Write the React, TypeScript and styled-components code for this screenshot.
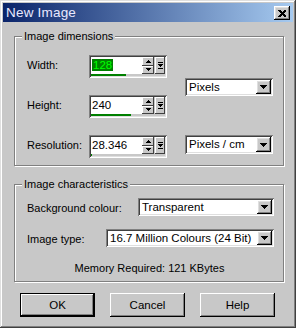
import React from "react";
import styled, { createGlobalStyle } from "styled-components";

const GRAY = "#c8c8c8";

const GlobalStyle = createGlobalStyle`
  html, body { margin: 0; padding: 0; background: ${GRAY}; }
  body { font-family: "Liberation Sans", Arial, sans-serif; font-size: 11px; color: #000; }
  * { box-sizing: border-box; }
`;

const raised = `box-shadow: inset -1px -1px #000, inset 1px 1px #fff, inset -2px -2px #808080, inset 2px 2px #dfdfdf;`;
const sunken = `box-shadow: inset 1px 1px #808080, inset -1px -1px #fff, inset 2px 2px #404040, inset -2px -2px #dfdfdf;`;

const Window = styled.div`
  width: 296px;
  height: 328px;
  padding: 3px;
  overflow: hidden;
  background: ${GRAY};
  box-shadow: inset -1px -1px #404040, inset 1px 1px #dfdfdf, inset -2px -2px #808080, inset 2px 2px #fff;
  display: flex;
  flex-direction: column;
`;

const TitleBar = styled.div`
  height: 19px;
  flex-shrink: 0;
  display: flex;
  align-items: center;
  justify-content: space-between;
  padding: 0 3px 0 3px;
  background: linear-gradient(to right, #0a246a, #a6caf0);
`;

const TitleText = styled.span`
  color: #e8e8ff;
  font-size: 13.5px;
  letter-spacing: 0.2px;
`;

const CloseButton = styled.div`
  width: 16px;
  height: 14px;
  background: ${GRAY};
  ${raised}
  display: flex;
  align-items: center;
  justify-content: center;
  margin-top: 1px;
`;

const Content = styled.div`
  display: flex;
  flex-direction: column;
  padding: 14px 9px 0 11px;
`;

const GroupBox = styled.div<{ $pt: number; $pb: number; $mt: number }>`
  position: relative;
  width: 270px;
  margin-top: ${(p) => p.$mt}px;
  padding: ${(p) => p.$pt}px 9px ${(p) => p.$pb}px 12px;
  border: 1px solid #808080;
  box-shadow: inset 1px 1px #fff, 1px 1px #fff;
`;

const Legend = styled.span`
  position: absolute;
  top: -7px;
  left: 7px;
  padding: 0 2px;
  line-height: 13px;
  background: ${GRAY};
`;

const DimGrid = styled.div`
  display: grid;
  grid-template-columns: 62px 96px 88px;
  grid-template-rows: 23px 23px 23px;
  row-gap: 17px;
`;

const Label = styled.span<{ $row: number }>`
  grid-column: 1;
  grid-row: ${(p) => p.$row};
  align-self: start;
  padding-top: 2px;
  line-height: 17px;
  white-space: nowrap;
`;

const SpinFrame = styled.div<{ $row: number }>`
  grid-column: 2;
  grid-row: ${(p) => p.$row};
  width: 78px;
  height: 23px;
  padding: 2px;
  background: ${GRAY};
  ${sunken}
  display: flex;
  flex-direction: column;
`;

const SpinRow = styled.div`
  height: 17px;
  display: flex;
`;

const FieldText = styled.div`
  width: 52px;
  background: #fff;
  padding-left: 1px;
  line-height: 17px;
  font-size: 11.5px;
`;

const Selected = styled.span`
  background: #008000;
  color: #00ff00;
  padding: 0 1px;
`;

const SpinCol = styled.div`
  width: 12px;
  display: flex;
  flex-direction: column;
`;

const SpinBtn = styled.div`
  flex: 1;
  background: ${GRAY};
  box-shadow: inset -1px -1px #404040, inset 1px 1px #fff;
  display: flex;
  align-items: center;
  justify-content: center;
`;

const MenuBtn = styled.div`
  width: 10px;
  margin-left: 1px;
  background: ${GRAY};
  box-shadow: inset -1px -1px #404040, inset 1px 1px #fff;
  display: flex;
  align-items: center;
  justify-content: center;
`;

const Track = styled.div`
  height: 2px;
  display: flex;
`;

const TrackFill = styled.div`
  height: 2px;
  background: #008000;
`;

const SelectBox = styled.div<{ $w: number; $grid?: string }>`
  width: ${(p) => p.$w}px;
  height: 18px;
  padding: 2px;
  background: #fff;
  ${sunken}
  display: flex;
  align-items: stretch;
  ${(p) => p.$grid || ""}
`;

const SelectText = styled.div`
  flex: 1;
  padding-left: 2px;
  line-height: 14px;
  font-size: 11.5px;
  white-space: nowrap;
`;

const SelectBtn = styled.div`
  width: 15px;
  background: ${GRAY};
  ${raised}
  display: flex;
  align-items: center;
  justify-content: center;
`;

const CharRow = styled.div<{ $mt: number }>`
  display: flex;
  justify-content: space-between;
  align-items: center;
  height: 18px;
  margin-top: ${(p) => p.$mt}px;
`;

const RowLabel = styled.span`
  padding-top: 2px;
  white-space: nowrap;
`;

const MemoryText = styled.div`
  margin-top: 15px;
  line-height: 13px;
  text-align: center;
  padding-right: 2px;
`;

const ButtonRow = styled.div`
  display: flex;
  gap: 15px;
  margin-top: 11px;
  padding-left: 6px;
`;

const Button = styled.div<{ $default?: boolean }>`
  width: 75px;
  height: 24px;
  display: flex;
  align-items: center;
  justify-content: center;
  background: ${GRAY};
  font-size: 11.5px;
  ${(p) =>
    p.$default
      ? `box-shadow: inset 0 0 0 1px #000, inset -2px -2px #000, inset 2px 2px #fff, inset -3px -3px #808080;`
      : `box-shadow: inset -1px -1px #000, inset 1px 1px #fff, inset -2px -2px #808080;`}
`;

const DownArrow = () => (
  <svg width="7" height="4" viewBox="0 0 7 4" shapeRendering="crispEdges">
    <polygon points="0,0 7,0 3.5,4" fill="#000" />
  </svg>
);

const SmallArrow = ({ up }: { up?: boolean }) => (
  <svg width="5" height="3" viewBox="0 0 5 3" shapeRendering="crispEdges">
    <polygon points={up ? "2.5,0 5,3 0,3" : "0,0 5,0 2.5,3"} fill="#000" />
  </svg>
);

const MenuGlyph = () => (
  <svg width="5" height="7" viewBox="0 0 5 7" shapeRendering="crispEdges">
    <rect x="0" y="0" width="5" height="1" fill="#000" />
    <polygon points="0,2 5,2 2.5,5" fill="#000" />
    <rect x="0" y="6" width="5" height="1" fill="#000" />
  </svg>
);

const CloseGlyph = () => (
  <svg width="8" height="7" viewBox="0 0 8 7" shapeRendering="crispEdges">
    <path d="M0 0h2l2 2 2-2h2v1l-2.5 2.5L8 6v1H6L4 5 2 7H0V6l2.5-2.5L0 1z" fill="#000" />
  </svg>
);

const SpinField = ({ value, fill, selected, row }: { value: string; fill: number; selected?: boolean; row: number }) => (
  <SpinFrame $row={row}>
    <SpinRow>
      <FieldText>{selected ? <Selected>{value}</Selected> : value}</FieldText>
      <SpinCol>
        <SpinBtn><SmallArrow up /></SpinBtn>
        <SpinBtn><SmallArrow /></SpinBtn>
      </SpinCol>
      <MenuBtn><MenuGlyph /></MenuBtn>
    </SpinRow>
    <Track>
      <TrackFill style={{ width: fill }} />
    </Track>
  </SpinFrame>
);

const Select = ({ text, w, grid }: { text: string; w: number; grid?: string }) => (
  <SelectBox $w={w} $grid={grid}>
    <SelectText>{text}</SelectText>
    <SelectBtn><DownArrow /></SelectBtn>
  </SelectBox>
);

export default function App() {
  return (
    <>
      <GlobalStyle />
      <Window>
        <TitleBar>
          <TitleText>New Image</TitleText>
          <CloseButton><CloseGlyph /></CloseButton>
        </TitleBar>
        <Content>
          <GroupBox $pt={18} $pb={7} $mt={0}>
            <Legend>Image dimensions</Legend>
            <DimGrid>
              <Label $row={1}>Width:</Label>
              <SpinField row={1} value="128" fill={35} selected />
              <Select text="Pixels" w={88} grid="grid-column: 3; grid-row: 1 / span 2; align-self: center;" />
              <Label $row={2}>Height:</Label>
              <SpinField row={2} value="240" fill={40} />
              <Label $row={3}>Resolution:</Label>
              <SpinField row={3} value="28.346" fill={1} />
              <Select text="Pixels / cm" w={88} grid="grid-column: 3; grid-row: 3; align-self: start; height: 19px;" />
            </DimGrid>
          </GroupBox>
          <GroupBox $pt={13} $pb={6} $mt={18}>
            <Legend>Image characteristics</Legend>
            <CharRow $mt={0}>
              <RowLabel>Background colour:</RowLabel>
              <Select text="Transparent" w={136} />
            </CharRow>
            <CharRow $mt={13}>
              <RowLabel>Image type:</RowLabel>
              <Select text="16.7 Million Colours (24 Bit)" w={168} />
            </CharRow>
            <MemoryText>Memory Required: 121 KBytes</MemoryText>
          </GroupBox>
          <ButtonRow>
            <Button $default>OK</Button>
            <Button>Cancel</Button>
            <Button>Help</Button>
          </ButtonRow>
        </Content>
      </Window>
    </>
  );
}
